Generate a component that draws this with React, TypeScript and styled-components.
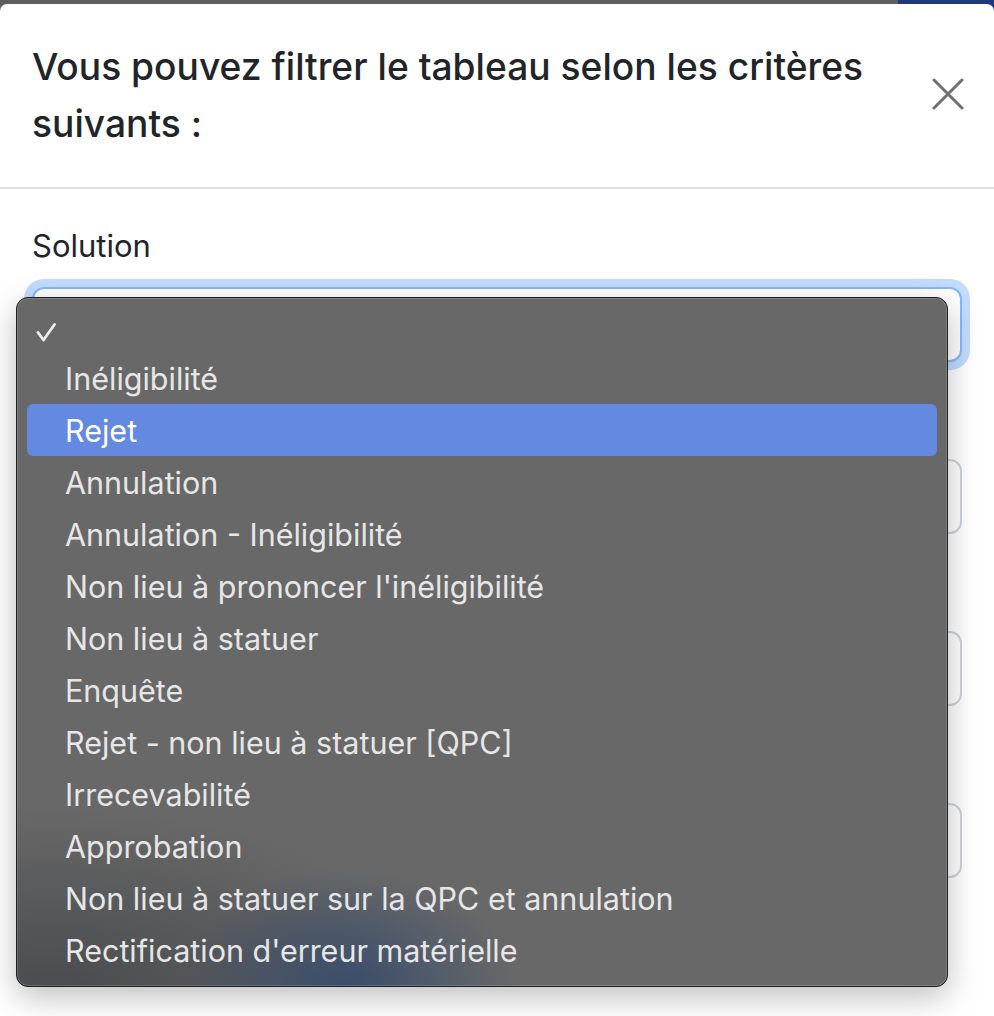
import React from "react";
import styled, { createGlobalStyle } from "styled-components";

const GlobalStyle = createGlobalStyle`
  html, body { margin: 0; padding: 0; }
  body {
    background: #ffffff;
    font-family: Inter, "Noto Sans", "Liberation Sans", sans-serif;
    -webkit-font-smoothing: antialiased;
  }
  * { box-sizing: border-box; }
`;

const Backdrop = styled.div`
  min-height: 1016px;
  padding-top: 4px;
  display: flex;
  flex-direction: column;
  background-image: linear-gradient(to right, #5e5e5e 898px, #1f3877 898px);
  background-size: 100% 14px;
  background-repeat: no-repeat;
`;

const Modal = styled.div`
  flex: 1;
  background: #ffffff;
  border-radius: 7px 7px 0 0;
  display: flex;
  flex-direction: column;
`;

const Header = styled.div`
  display: flex;
  align-items: center;
  justify-content: space-between;
  padding: 34px 22px 35px 32px;
  border-bottom: 2px solid #dee2e6;
`;

const Title = styled.h5`
  margin: 0;
  font-size: 37.2px;
  font-weight: 500;
  line-height: 57px;
  color: #212529;
  flex: 1;
  padding-right: 30px;
`;

const CloseButton = styled.button`
  width: 48px;
  height: 48px;
  margin-top: -2px;
  border: none;
  background: none;
  padding: 0;
  display: flex;
  align-items: center;
  justify-content: center;
  flex-shrink: 0;
  cursor: pointer;
`;

const Body = styled.div`
  padding: 33px 32px 0;
  display: flex;
  flex-direction: column;
`;

const FieldGroup = styled.div`
  margin-bottom: 32px;
`;

const Label = styled.label`
  display: block;
  min-height: 48px;
  font-size: 31px;
  line-height: 48px;
  margin-bottom: 17px;
  color: #212529;
`;

const SelectWrap = styled.div`
  position: relative;
`;

const SelectBox = styled.div<{ $focused?: boolean }>`
  height: 75px;
  background: #ffffff;
  border: 2px solid ${(p) => (p.$focused ? "#86b7fe" : "#ced4da")};
  border-radius: 12px;
  box-shadow: ${(p) => (p.$focused ? "0 0 0 8px rgba(13, 110, 253, 0.25)" : "none")};
`;

const Menu = styled.div`
  position: absolute;
  left: -16px;
  top: 10px;
  width: 932px;
  z-index: 10;
  padding: 10px 0;
  border: 1px solid #1f1f1f;
  border-radius: 12px;
  background:
    radial-gradient(ellipse 170px 120px at 330px 690px, rgba(48, 72, 110, 0.8), rgba(48, 72, 110, 0) 100%),
    radial-gradient(ellipse 380px 190px at 40px 700px, rgba(62, 64, 68, 0.75), rgba(62, 64, 68, 0) 100%),
    #686868;
  box-shadow:
    inset 0 0 0 1px rgba(255, 255, 255, 0.16),
    0 10px 32px rgba(0, 0, 0, 0.26);
  display: flex;
  flex-direction: column;
`;

const MenuItem = styled.div<{ $active?: boolean; $short?: boolean }>`
  height: ${(p) => (p.$short ? "44px" : "52px")};
  margin: 0 10px;
  border-radius: 6px;
  display: flex;
  align-items: center;
  font-size: 30.5px;
  color: ${(p) => (p.$active ? "#ffffff" : "#e6e6e6")};
  background: ${(p) => (p.$active ? "#6389e1" : "transparent")};
  white-space: nowrap;
`;

const CheckSlot = styled.span`
  width: 38px;
  flex-shrink: 0;
  display: flex;
  align-items: center;
  padding-left: 9px;
  padding-top: 4px;
`;

const options = [
  "",
  "Inéligibilité",
  "Rejet",
  "Annulation",
  "Annulation - Inéligibilité",
  "Non lieu à prononcer l'inéligibilité",
  "Non lieu à statuer",
  "Enquête",
  "Rejet - non lieu à statuer [QPC]",
  "Irrecevabilité",
  "Approbation",
  "Non lieu à statuer sur la QPC et annulation",
  "Rectification d'erreur matérielle",
];

const CheckIcon = () => (
  <svg width="20" height="20" viewBox="0 0 20 20">
    <polyline
      points="2,10.5 7.5,18 18.5,2.5"
      fill="none"
      stroke="#ebebeb"
      strokeWidth="2.8"
      strokeLinecap="round"
      strokeLinejoin="round"
    />
  </svg>
);

const CloseIcon = () => (
  <svg width="32" height="32" viewBox="0 0 32 32">
    <path d="M2 2 L30 30 M30 2 L2 30" stroke="#707070" strokeWidth="3" strokeLinecap="round" />
  </svg>
);

export default function App() {
  return (
    <>
      <GlobalStyle />
      <Backdrop>
        <Modal>
          <Header>
            <Title>Vous pouvez filtrer le tableau selon les critères suivants :</Title>
            <CloseButton aria-label="Fermer">
              <CloseIcon />
            </CloseButton>
          </Header>
          <Body>
            <FieldGroup>
              <Label>Solution</Label>
              <SelectWrap>
                <SelectBox $focused />
                <Menu>
                  {options.map((o, i) => (
                    <MenuItem key={i} $short={i === 0} $active={o === "Rejet"}>
                      <CheckSlot>{i === 0 ? <CheckIcon /> : null}</CheckSlot>
                      {o}
                    </MenuItem>
                  ))}
                </Menu>
              </SelectWrap>
            </FieldGroup>
            <FieldGroup>
              <Label />
              <SelectBox />
            </FieldGroup>
            <FieldGroup>
              <Label />
              <SelectBox />
            </FieldGroup>
            <FieldGroup>
              <Label />
              <SelectBox />
            </FieldGroup>
          </Body>
        </Modal>
      </Backdrop>
    </>
  );
}
